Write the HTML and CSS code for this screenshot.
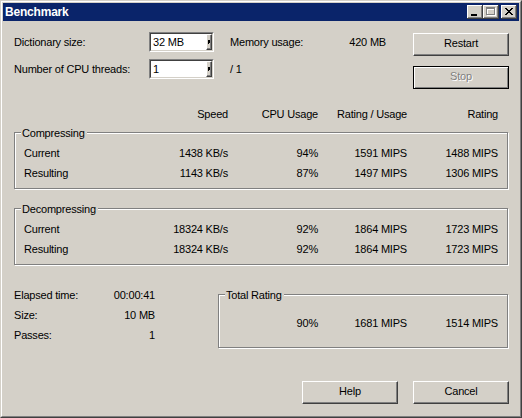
FILE: index.html
```html
<!DOCTYPE html>
<html>
<head>
<meta charset="utf-8">
<title>Benchmark</title>
<link rel="stylesheet" href="styles.css">
</head>
<body>
<div class="window">
  <div class="frame">
    <div class="titlebar">
      <span class="title">Benchmark</span>
      <div class="caption">
        <span class="cap-btn">
          <svg width="16" height="14" viewBox="0 0 16 14" shape-rendering="crispEdges"><path d="M4 9h6v2H4z" fill="#000"/></svg>
        </span>
        <span class="cap-btn">
          <svg width="16" height="14" viewBox="0 0 16 14" shape-rendering="crispEdges">
            <path d="M4 3h9v2H4zM4 5h1v6H4zM12 5h1v6h-1zM4 10h9v1H4z" fill="#fff"/>
            <path d="M3 2h9v2H3zM3 4h1v6H3zM11 4h1v6h-1zM3 9h9v1H3z" fill="#808080"/>
          </svg>
        </span>
        <span class="cap-btn close">
          <svg width="16" height="14" viewBox="0 0 16 14" shape-rendering="crispEdges"><path d="M4 3h2v1H4zM10 3h2v1h-2zM5 4h2v1H5zM9 4h2v1H9zM6 5h4v1H6zM7 6h2v1H7zM6 7h4v1H6zM5 8h2v1H5zM9 8h2v1H9zM4 9h2v1H4zM10 9h2v1h-2z" fill="#000"/></svg>
        </span>
      </div>
    </div>

    <div class="content">
      <div class="top">
        <div class="settings">
          <span>Dictionary size:</span>
          <div class="combo">
            <div class="combo-inner">
              <span class="combo-text">32 MB</span>
              <span class="combo-btn"><svg width="2" height="4" viewBox="0 0 2 4" shape-rendering="crispEdges"><path d="M0 0h2v3H1v1H0z" fill="#000"/></svg></span>
            </div>
          </div>
          <div class="info"><span>Memory usage:</span><span>420 MB</span></div>

          <span>Number of CPU threads:</span>
          <div class="combo">
            <div class="combo-inner">
              <span class="combo-text">1</span>
              <span class="combo-btn"><svg width="2" height="4" viewBox="0 0 2 4" shape-rendering="crispEdges"><path d="M0 0h2v3H1v1H0z" fill="#000"/></svg></span>
            </div>
          </div>
          <div class="info"><span>/ 1</span></div>
        </div>
        <div class="actions">
          <button class="btn">Restart</button>
          <button class="btn default" disabled>Stop</button>
        </div>
      </div>

      <div class="cols header">
        <span></span>
        <span class="num">Speed</span>
        <span class="num">CPU Usage</span>
        <span class="num">Rating / Usage</span>
        <span class="num">Rating</span>
      </div>

      <div class="group table-group">
        <span class="legend">Compressing</span>
        <div class="cols row">
          <span>Current</span>
          <span class="num">1438 KB/s</span>
          <span class="num">94%</span>
          <span class="num">1591 MIPS</span>
          <span class="num">1488 MIPS</span>
        </div>
        <div class="cols row">
          <span>Resulting</span>
          <span class="num">1143 KB/s</span>
          <span class="num">87%</span>
          <span class="num">1497 MIPS</span>
          <span class="num">1306 MIPS</span>
        </div>
      </div>

      <div class="group table-group second">
        <span class="legend">Decompressing</span>
        <div class="cols row">
          <span>Current</span>
          <span class="num">18324 KB/s</span>
          <span class="num">92%</span>
          <span class="num">1864 MIPS</span>
          <span class="num">1723 MIPS</span>
        </div>
        <div class="cols row">
          <span>Resulting</span>
          <span class="num">18324 KB/s</span>
          <span class="num">92%</span>
          <span class="num">1864 MIPS</span>
          <span class="num">1723 MIPS</span>
        </div>
      </div>

      <div class="bottom">
        <div class="stats">
          <div class="stat-row"><span>Elapsed time:</span><span>00:00:41</span></div>
          <div class="stat-row"><span>Size:</span><span>10 MB</span></div>
          <div class="stat-row"><span>Passes:</span><span>1</span></div>
        </div>
        <div class="group total">
          <span class="legend">Total Rating</span>
          <div class="total-row">
            <span></span>
            <span class="num">90%</span>
            <span class="num">1681 MIPS</span>
            <span class="num">1514 MIPS</span>
          </div>
        </div>
      </div>

      <div class="footer">
        <button class="btn">Help</button>
        <button class="btn">Cancel</button>
      </div>
    </div>
  </div>
</div>
</body>
</html>
```

FILE: styles.css
```css
html, body {
  margin: 0;
  padding: 0;
  background: #D4D0C8;
}

.window {
  width: 522px;
  height: 418px;
  box-sizing: border-box;
  border: 1px solid;
  border-color: #D4D0C8 #404040 #404040 #D4D0C8;
  background: #D4D0C8;
  font-family: "Liberation Sans", Arial, sans-serif;
  font-size: 11px;
  letter-spacing: -0.2px;
  color: #000;
}

.frame {
  height: 100%;
  box-sizing: border-box;
  border: 1px solid;
  border-color: #fff #808080 #808080 #fff;
  padding: 1px;
  display: flex;
  flex-direction: column;
}

.titlebar {
  flex: none;
  height: 18px;
  background: #0A246A;
  display: flex;
  align-items: center;
  padding-left: 2px;
}

.title {
  color: #fff;
  font-weight: bold;
  font-size: 12px;
  letter-spacing: -0.2px;
  line-height: 18px;
}

.caption {
  margin-left: auto;
  margin-right: 2px;
  display: flex;
}

.cap-btn {
  display: block;
  width: 16px;
  height: 14px;
  background: #D4D0C8;
  box-shadow: inset -1px -1px #404040, inset 1px 1px #fff, inset -2px -2px #808080;
}

.cap-btn svg {
  display: block;
}

.cap-btn.close {
  margin-left: 2px;
}

.content {
  flex: 1;
  display: flex;
  flex-direction: column;
  padding: 0 10px 11px 11px;
}

.top {
  display: flex;
  padding-top: 11px;
}

.settings {
  display: grid;
  grid-template-columns: 135px 81px 156px;
  grid-template-rows: 20px 20px;
  row-gap: 7px;
  align-items: center;
  line-height: 14px;
}

.combo {
  width: 65px;
  height: 20px;
  box-sizing: border-box;
  border: 1px solid;
  border-color: #808080 #fff #fff #808080;
  display: flex;
}

.combo-inner {
  flex: 1;
  display: flex;
  border: 1px solid;
  border-color: #404040 #D4D0C8 #D4D0C8 #404040;
  background: #fff;
}

.combo-text {
  flex: 1;
  padding-left: 2px;
  line-height: 16px;
}

.combo-btn {
  width: 6px;
  box-sizing: border-box;
  background: #D4D0C8;
  border: 1px solid;
  border-color: #fff #404040 #404040 #fff;
  box-shadow: inset -1px -1px #808080;
  display: flex;
  align-items: center;
  justify-content: center;
}

.combo-btn svg {
  display: block;
}

.info {
  display: flex;
  justify-content: space-between;
}

.actions {
  margin-left: 27px;
  padding-top: 1px;
  display: flex;
  flex-direction: column;
  gap: 10px;
}

.btn {
  width: 96px;
  height: 23px;
  box-sizing: border-box;
  margin: 0;
  padding: 0 0 2px 0;
  font: inherit;
  letter-spacing: inherit;
  line-height: 13px;
  color: #000;
  background: #D4D0C8;
  border: 1px solid;
  border-color: #fff #404040 #404040 #fff;
  box-shadow: inset -1px -1px #808080;
  display: flex;
  align-items: center;
  justify-content: center;
}

.btn.default {
  border: 1px solid #000;
  box-shadow: inset 1px 1px #fff, inset -1px -1px #808080;
}

.btn:disabled {
  color: #808080;
  text-shadow: 1px 1px 0 #fff;
}

.cols {
  display: grid;
  grid-template-columns: 104px 100px 90px 89px 91px;
}

.num {
  text-align: right;
}

.header {
  width: 494px;
  box-sizing: border-box;
  margin-top: 18px;
  padding: 0 10px;
  line-height: 14px;
}

.group {
  position: relative;
  box-sizing: border-box;
  border: 1px solid #808080;
  box-shadow: inset 1px 1px #fff, 1px 1px #fff;
}

.legend {
  position: absolute;
  top: -6px;
  left: 6px;
  padding: 0 2px 0 1px;
  background: #D4D0C8;
  line-height: 13px;
}

.table-group {
  width: 494px;
  margin-top: 11px;
  padding: 10px 9px 5px 9px;
}

.table-group.second {
  margin-top: 19px;
}

.row {
  line-height: 20px;
}

.bottom {
  display: flex;
  align-items: flex-start;
  margin-top: 20px;
}

.stats {
  width: 141px;
}

.stat-row {
  display: flex;
  justify-content: space-between;
  line-height: 20px;
}

.total {
  width: 290px;
  margin-left: 63px;
  margin-top: 9px;
  padding: 18px 9px 14px 0;
}

.total-row {
  display: grid;
  grid-template-columns: 1fr 90px 89px 91px;
  line-height: 20px;
}

.footer {
  margin-top: auto;
  display: flex;
  justify-content: flex-end;
  gap: 15px;
}
```
